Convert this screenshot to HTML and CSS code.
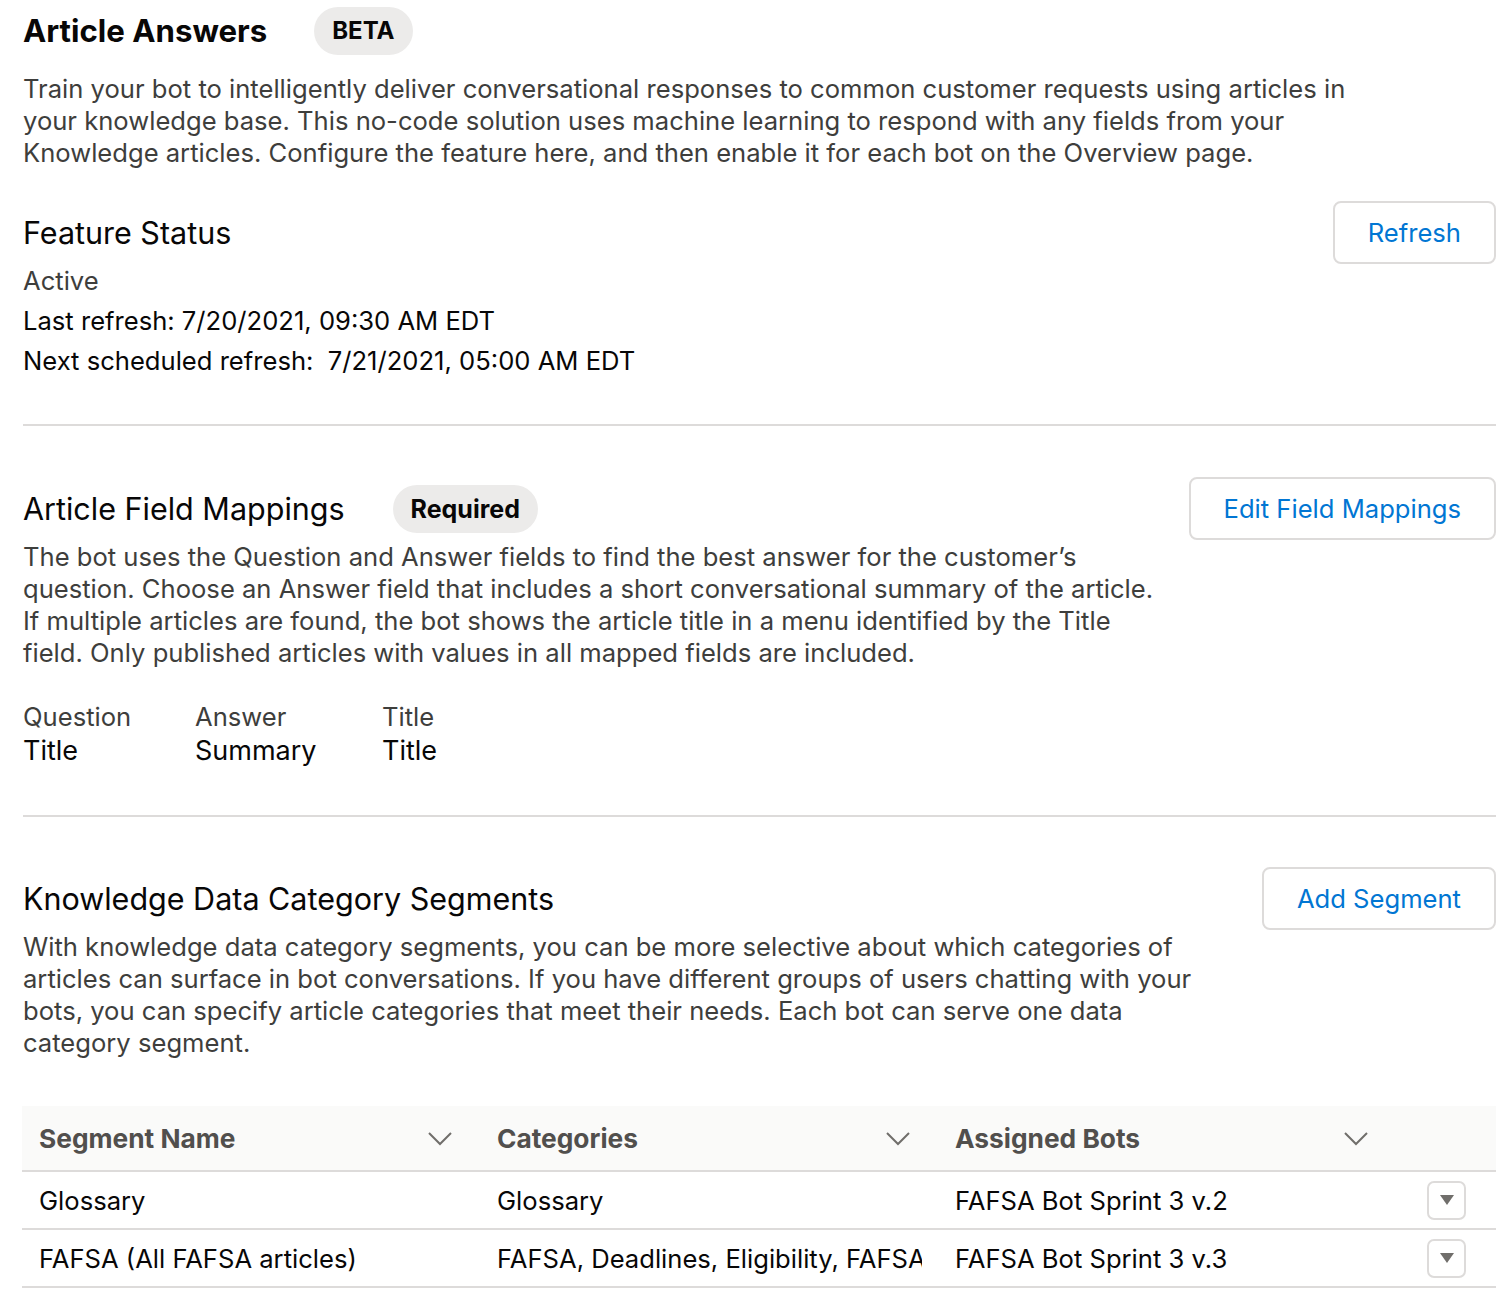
FILE: index.html
```html
<!DOCTYPE html>
<html lang="en">
<head>
  <meta charset="UTF-8" />
  <meta name="viewport" content="width=device-width, initial-scale=1" />
  <title>Article Answers</title>
  <link rel="stylesheet" href="styles.css">
</head>
<body>
  <div class="page">

    <div class="title-row">
      <h1>Article Answers</h1>
      <span class="badge">BETA</span>
    </div>
    <p class="desc intro">Train your bot to intelligently deliver conversational responses to common customer requests using articles in your knowledge base. This no-code solution uses machine learning to respond with any fields from your Knowledge articles. Configure the feature here, and then enable it for each bot on the Overview page.</p>

    <section class="section status">
      <div class="section-head">
        <h2>Feature Status</h2>
        <button class="btn">Refresh</button>
      </div>
      <div class="status-list">
        <div class="muted">Active</div>
        <div>Last refresh: 7/20/2021, 09:30 AM EDT</div>
        <div>Next scheduled refresh:&nbsp; 7/21/2021, 05:00 AM EDT</div>
      </div>
    </section>

    <section class="section mappings">
      <div class="section-head">
        <div class="head-left">
          <h2>Article Field Mappings</h2>
          <span class="badge small">Required</span>
        </div>
        <button class="btn">Edit Field Mappings</button>
      </div>
      <p class="desc narrow">The bot uses the Question and Answer fields to find the best answer for the customer’s question. Choose an Answer field that includes a short conversational summary of the article. If multiple articles are found, the bot shows the article title in a menu identified by the Title field. Only published articles with values in all mapped fields are included.</p>
      <div class="fields">
        <div class="field f1">
          <div class="muted">Question</div>
          <div class="value">Title</div>
        </div>
        <div class="field f2">
          <div class="muted">Answer</div>
          <div class="value">Summary</div>
        </div>
        <div class="field">
          <div class="muted">Title</div>
          <div class="value">Title</div>
        </div>
      </div>
    </section>

    <section class="section segments">
      <div class="section-head">
        <h2>Knowledge Data Category Segments</h2>
        <button class="btn">Add Segment</button>
      </div>
      <p class="desc wide">With knowledge data category segments, you can be more selective about which categories of articles can surface in bot conversations. If you have different groups of users chatting with your bots, you can specify article categories that meet their needs. Each bot can serve one data category segment.</p>

      <table class="grid">
        <thead>
          <tr>
            <th><span>Segment Name</span><svg class="chev" viewBox="0 0 24 14"><path d="M1 1 L12 12 L23 1" /></svg></th>
            <th><span>Categories</span><svg class="chev" viewBox="0 0 24 14"><path d="M1 1 L12 12 L23 1" /></svg></th>
            <th><span>Assigned Bots</span><svg class="chev" viewBox="0 0 24 14"><path d="M1 1 L12 12 L23 1" /></svg></th>
            <th class="act-col"></th>
          </tr>
        </thead>
        <tbody>
          <tr>
            <td><div class="cell">Glossary</div></td>
            <td><div class="cell">Glossary</div></td>
            <td><div class="cell">FAFSA Bot Sprint 3 v.2</div></td>
            <td class="act-col"><button class="menu-btn"><svg viewBox="0 0 14 10"><path d="M0 0 L14 0 L7 10 Z" /></svg></button></td>
          </tr>
          <tr>
            <td><div class="cell">FAFSA (All FAFSA articles)</div></td>
            <td><div class="cell">FAFSA, Deadlines, Eligibility, FAFSA Basics</div></td>
            <td><div class="cell">FAFSA Bot Sprint 3 v.3</div></td>
            <td class="act-col"><button class="menu-btn"><svg viewBox="0 0 14 10"><path d="M0 0 L14 0 L7 10 Z" /></svg></button></td>
          </tr>
        </tbody>
      </table>
    </section>

  </div>
</body>
</html>
```

FILE: styles.css
```css
body {
  margin: 0;
  padding: 0;
  background: #ffffff;
  font-family: Inter, "Noto Sans", Arial, sans-serif;
  color: #080707;
}

.page {
  padding: 0 16px 0 23px;
}

h1 {
  margin: 0;
  font-size: 31.2px;
  font-weight: 700;
  line-height: 56px;
}

h2 {
  margin: 0;
  font-size: 30.5px;
  font-weight: 400;
  line-height: 40px;
}

.title-row {
  display: flex;
  align-items: center;
  gap: 47px;
  height: 58px;
  padding-top: 2px;
}

.badge {
  display: inline-block;
  background: #ecebea;
  border-radius: 24px;
  font-size: 24px;
  font-weight: 700;
  line-height: 48px;
  padding: 0 18px;
}

.badge.small {
  font-size: 25px;
}

.desc {
  margin: 0;
  font-size: 25.6px;
  line-height: 32px;
  color: #3e3e3c;
}

.intro {
  margin-top: 13px;
  max-width: 1350px;
}

.narrow {
  max-width: 1150px;
}

.wide {
  max-width: 1190px;
}

.muted {
  color: #3e3e3c;
}

.section-head {
  display: flex;
  justify-content: space-between;
  align-items: center;
}

.head-left {
  display: flex;
  align-items: center;
  gap: 48px;
}

.btn {
  font-family: inherit;
  font-size: 25.6px;
  color: #0176d3;
  background: #ffffff;
  border: 2px solid #dddbda;
  border-radius: 8px;
  height: 63px;
  padding: 0 33px;
  cursor: pointer;
}

.status {
  padding-top: 32px;
  padding-bottom: 43px;
  border-bottom: 2px solid #dddbda;
}

.status-list {
  font-size: 25.6px;
  line-height: 40px;
  margin-top: -3px;
}

.mappings {
  padding-top: 51px;
  padding-bottom: 46px;
  border-bottom: 2px solid #dddbda;
}

.mappings .desc {
  margin-top: 1px;
}

.fields {
  display: flex;
  margin-top: 32px;
  font-size: 25.6px;
}

.field .muted {
  line-height: 32px;
}

.field .value {
  font-size: 27px;
  line-height: 36px;
}

.f1 {
  width: 172px;
}

.f2 {
  width: 187px;
}

.segments {
  padding-top: 50px;
}

.segments .desc {
  margin-top: 1px;
}

.grid {
  width: calc(100% + 1px);
  margin-top: 47px;
  margin-left: -1px;
  border-collapse: collapse;
  table-layout: fixed;
  font-size: 25.6px;
}

.grid th {
  background: #fafaf9;
  color: #514f4d;
  font-size: 26.3px;
  font-weight: 700;
  text-align: left;
  height: 64px;
  padding: 0 0 0 17px;
  border-bottom: 2px solid #dddbda;
  position: relative;
}

.grid th span {
  vertical-align: middle;
}

.grid th .chev {
  position: absolute;
  right: 28px;
  top: 26px;
  width: 24px;
  height: 14px;
  fill: none;
  stroke: #706e6b;
  stroke-width: 2;
}

.grid td {
  height: 56px;
  padding: 0 16px 0 17px;
  border-bottom: 2px solid #dddbda;
}

.cell {
  white-space: nowrap;
  overflow: hidden;
  text-overflow: clip;
}

.grid th:nth-child(1),
.grid th:nth-child(2),
.grid th:nth-child(3) {
  width: 441px;
}

.act-col {
  text-align: right;
}

.grid td.act-col {
  padding-right: 30px;
}

.menu-btn {
  width: 39px;
  height: 39px;
  border: 2px solid #dddbda;
  border-radius: 7px;
  background: #ffffff;
  display: inline-flex;
  align-items: center;
  justify-content: center;
  padding: 0;
  vertical-align: middle;
}

.menu-btn svg {
  width: 14px;
  height: 10px;
  fill: #706e6b;
}
```
